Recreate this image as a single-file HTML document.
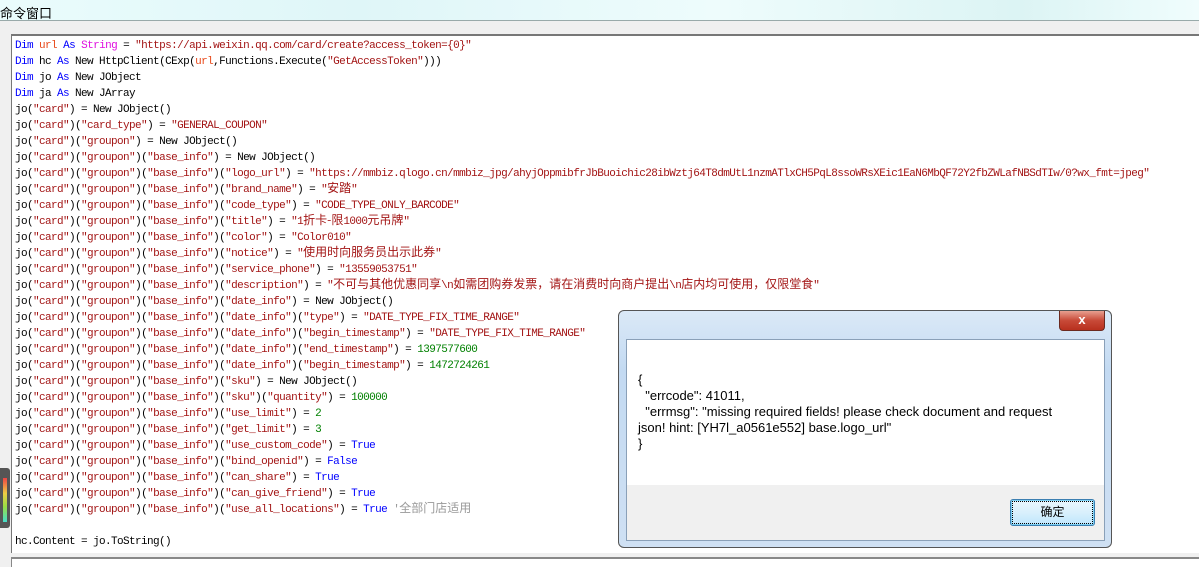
<!DOCTYPE html>
<html><head><meta charset="utf-8"><style>
*{margin:0;padding:0;box-sizing:border-box}
body{width:1199px;height:563px;overflow:hidden;background:#f0f0f0;position:relative;font-family:"Liberation Mono",monospace}
#title{position:absolute;left:0;top:0;width:1199px;height:21px;background:linear-gradient(90deg,#eafcfc,#dff6f8 30%,#eefcfc 60%,#dcf4f4 85%,#f0fdfd);border-bottom:1px solid #9aa;font:13px "Liberation Sans","Noto Sans CJK SC",sans-serif;padding:3px 0 0 0;color:#000}
#ed{position:absolute;left:11px;top:34px;width:1190px;height:519px;background:#fff;border-top:2px solid #777;border-left:1px solid #777}
#code{position:absolute;left:3px;top:2px;font-size:11px;letter-spacing:-0.6px;line-height:16px;white-space:pre;color:#000}
.k{color:#0000ff}.s{color:#a31515}.v{color:#e8491a}.t{color:#e010e0}.n{color:#008000}.c{color:#999}
.z{font-family:"Noto Sans CJK SC",sans-serif;font-size:12px;line-height:10px;letter-spacing:0}
#bot{position:absolute;left:11px;top:557px;width:1190px;height:10px;background:#fff;border-top:2px solid #888;border-left:1px solid #888}
#meter{position:absolute;left:0;top:468px;width:10px;height:60px;background:#555;border-radius:0 3px 3px 0}
#meter i{position:absolute;left:3px;top:10px;width:4px;height:44px;background:linear-gradient(#e44,#ec4 35%,#9d4 65%,#4dc)}
#dlg{position:absolute;left:618px;top:310px;width:494px;height:238px;border:1px solid #555;border-radius:6px;background:linear-gradient(180deg,#dbe9f7,#c3daf2 25%,#cfe0f3);}
#x{position:absolute;right:6px;top:0;width:46px;height:20px;background:linear-gradient(#e8a090,#c84a38 50%,#b8301e);border:1px solid #6b2a20;border-top:none;border-radius:0 0 4px 4px;color:#fff;font:bold 13px "Liberation Sans",sans-serif;text-align:center;line-height:18px}
#in{position:absolute;left:7px;top:28px;width:479px;height:202px;border:1px solid #8aa0b8;background:#f0f0f0}
#wh{position:absolute;left:0;top:0;width:477px;height:145px;background:#fff;font:13px "Liberation Sans",sans-serif;line-height:16px;padding:32px 0 0 11px;color:#000;white-space:pre}
#ok{position:absolute;left:383px;top:159px;width:85px;height:27px;border:1px solid #3c7fb1;border-radius:3px;background:linear-gradient(#eaf6fd,#d9f0fc 50%,#bee6fd);box-shadow:inset 0 0 0 1px #7fd2f5;font:12px "Liberation Sans","Noto Sans CJK SC",sans-serif;text-align:center;line-height:24px}
#ok span{outline:1px dotted #000;outline-offset:0;display:block;margin:2px;line-height:21px}
</style></head><body>
<div id="title">命令窗口</div>
<div id="ed"><div id="code"><span class="k">Dim</span> <span class="v">url</span> <span class="k">As</span> <span class="t">String</span> = <span class="s">"https://api.weixin.qq.com/card/create?access_token={0}"</span>
<span class="k">Dim</span> hc <span class="k">As</span> New HttpClient(CExp(<span class="v">url</span>,Functions.Execute(<span class="s">"GetAccessToken"</span>)))
<span class="k">Dim</span> jo <span class="k">As</span> New JObject
<span class="k">Dim</span> ja <span class="k">As</span> New JArray
jo(<span class="s">"card"</span>) = New JObject()
jo(<span class="s">"card"</span>)(<span class="s">"card_type"</span>) = <span class="s">"GENERAL_COUPON"</span>
jo(<span class="s">"card"</span>)(<span class="s">"groupon"</span>) = New JObject()
jo(<span class="s">"card"</span>)(<span class="s">"groupon"</span>)(<span class="s">"base_info"</span>) = New JObject()
jo(<span class="s">"card"</span>)(<span class="s">"groupon"</span>)(<span class="s">"base_info"</span>)(<span class="s">"logo_url"</span>) = <span class="s">"https://mmbiz.qlogo.cn/mmbiz_jpg/ahyjOppmibfrJbBuoichic28ibWztj64T8dmUtL1nzmATlxCH5PqL8ssoWRsXEic1EaN6MbQF72Y2fbZWLafNBSdTIw/0?wx_fmt=jpeg"</span>
jo(<span class="s">"card"</span>)(<span class="s">"groupon"</span>)(<span class="s">"base_info"</span>)(<span class="s">"brand_name"</span>) = <span class="s">"<span class="z">安踏</span>"</span>
jo(<span class="s">"card"</span>)(<span class="s">"groupon"</span>)(<span class="s">"base_info"</span>)(<span class="s">"code_type"</span>) = <span class="s">"CODE_TYPE_ONLY_BARCODE"</span>
jo(<span class="s">"card"</span>)(<span class="s">"groupon"</span>)(<span class="s">"base_info"</span>)(<span class="s">"title"</span>) = <span class="s">"1<span class="z">折卡-限</span>1000<span class="z">元吊牌</span>"</span>
jo(<span class="s">"card"</span>)(<span class="s">"groupon"</span>)(<span class="s">"base_info"</span>)(<span class="s">"color"</span>) = <span class="s">"Color010"</span>
jo(<span class="s">"card"</span>)(<span class="s">"groupon"</span>)(<span class="s">"base_info"</span>)(<span class="s">"notice"</span>) = <span class="s">"<span class="z">使用时向服务员出示此券</span>"</span>
jo(<span class="s">"card"</span>)(<span class="s">"groupon"</span>)(<span class="s">"base_info"</span>)(<span class="s">"service_phone"</span>) = <span class="s">"13559053751"</span>
jo(<span class="s">"card"</span>)(<span class="s">"groupon"</span>)(<span class="s">"base_info"</span>)(<span class="s">"description"</span>) = <span class="s">"<span class="z">不可与其他优惠同享</span>\n<span class="z">如需团购券发票，请在消费时向商户提出</span>\n<span class="z">店内均可使用，仅限堂食</span>"</span>
jo(<span class="s">"card"</span>)(<span class="s">"groupon"</span>)(<span class="s">"base_info"</span>)(<span class="s">"date_info"</span>) = New JObject()
jo(<span class="s">"card"</span>)(<span class="s">"groupon"</span>)(<span class="s">"base_info"</span>)(<span class="s">"date_info"</span>)(<span class="s">"type"</span>) = <span class="s">"DATE_TYPE_FIX_TIME_RANGE"</span>
jo(<span class="s">"card"</span>)(<span class="s">"groupon"</span>)(<span class="s">"base_info"</span>)(<span class="s">"date_info"</span>)(<span class="s">"begin_timestamp"</span>) = <span class="s">"DATE_TYPE_FIX_TIME_RANGE"</span>
jo(<span class="s">"card"</span>)(<span class="s">"groupon"</span>)(<span class="s">"base_info"</span>)(<span class="s">"date_info"</span>)(<span class="s">"end_timestamp"</span>) = <span class="n">1397577600</span>
jo(<span class="s">"card"</span>)(<span class="s">"groupon"</span>)(<span class="s">"base_info"</span>)(<span class="s">"date_info"</span>)(<span class="s">"begin_timestamp"</span>) = <span class="n">1472724261</span>
jo(<span class="s">"card"</span>)(<span class="s">"groupon"</span>)(<span class="s">"base_info"</span>)(<span class="s">"sku"</span>) = New JObject()
jo(<span class="s">"card"</span>)(<span class="s">"groupon"</span>)(<span class="s">"base_info"</span>)(<span class="s">"sku"</span>)(<span class="s">"quantity"</span>) = <span class="n">100000</span>
jo(<span class="s">"card"</span>)(<span class="s">"groupon"</span>)(<span class="s">"base_info"</span>)(<span class="s">"use_limit"</span>) = <span class="n">2</span>
jo(<span class="s">"card"</span>)(<span class="s">"groupon"</span>)(<span class="s">"base_info"</span>)(<span class="s">"get_limit"</span>) = <span class="n">3</span>
jo(<span class="s">"card"</span>)(<span class="s">"groupon"</span>)(<span class="s">"base_info"</span>)(<span class="s">"use_custom_code"</span>) = <span class="k">True</span>
jo(<span class="s">"card"</span>)(<span class="s">"groupon"</span>)(<span class="s">"base_info"</span>)(<span class="s">"bind_openid"</span>) = <span class="k">False</span>
jo(<span class="s">"card"</span>)(<span class="s">"groupon"</span>)(<span class="s">"base_info"</span>)(<span class="s">"can_share"</span>) = <span class="k">True</span>
jo(<span class="s">"card"</span>)(<span class="s">"groupon"</span>)(<span class="s">"base_info"</span>)(<span class="s">"can_give_friend"</span>) = <span class="k">True</span>
jo(<span class="s">"card"</span>)(<span class="s">"groupon"</span>)(<span class="s">"base_info"</span>)(<span class="s">"use_all_locations"</span>) = <span class="k">True</span> <span class="c">'<span class="z">全部门店适用</span></span>

hc.Content = jo.ToString()</div></div>
<div id="bot"></div>
<div id="meter"><i></i></div>
<div id="dlg"><div id="x">x</div>
<div id="in"><div id="wh">{
  "errcode": 41011,
  "errmsg": "missing required fields! please check document and request
json! hint: [YH7l_a0561e552] base.logo_url"
}</div>
<div id="ok"><span>确定</span></div></div></div>
</body></html>
